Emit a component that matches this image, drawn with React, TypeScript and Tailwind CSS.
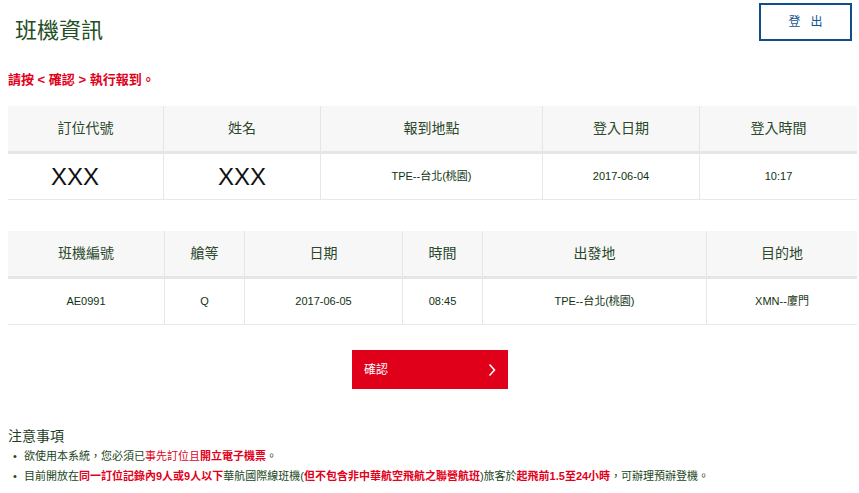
import React from "react";

const FONT = { fontFamily: '"Liberation Sans", Arial, "Noto Sans CJK TC", sans-serif' };

function HeaderCell({ children, last }: { children: React.ReactNode; last?: boolean }) {
  return (
    <div
      className={`flex items-center justify-center h-[45px] bg-[#f7f7f7] text-[14px] text-[#2b472b] ${
        last ? "" : "border-r border-[#e6e6e6]"
      }`}
    >
      {children}
    </div>
  );
}

function BodyCell({
  children,
  last,
  big,
  first,
}: {
  children: React.ReactNode;
  last?: boolean;
  big?: boolean;
  first?: boolean;
}) {
  return (
    <div
      className={`flex items-center justify-center h-[45px] bg-white ${
        big ? "text-[24px] text-[#111111]" : "text-[11px] text-[#0f330f]"
      } ${first ? "pr-[21px]" : ""} ${last ? "" : "border-r border-[#e6e6e6]"}`}
    >
      {children}
    </div>
  );
}

export default function App() {
  const t1 = ["訂位代號", "姓名", "報到地點", "登入日期", "登入時間"];
  const t2 = ["班機編號", "艙等", "日期", "時間", "出發地", "目的地"];
  const t2v = ["AE0991", "Q", "2017-06-05", "08:45", "TPE--台北(桃園)", "XMN--廈門"];
  return (
    <div className="w-[859px] h-[493px] bg-white overflow-hidden relative" style={FONT}>
      {/* top bar */}
      <div className="flex justify-between items-start">
        <h1 className="ml-[15px] mt-[16px] text-[22px] leading-[30px] text-[#234d23] font-normal">
          班機資訊
        </h1>
        <button className="mt-[3px] mr-[7px] w-[93px] h-[38px] border-2 border-[#0e4f8a] bg-white text-[#15578f] text-[12px] flex items-center justify-center gap-[10px]">
          <span>登</span>
          <span>出</span>
        </button>
      </div>

      <p className="ml-2 mt-[26px] text-[13px] leading-[16px] font-bold text-[#e2001a]">
        請按 &lt; 確認 &gt; 執行報到。
      </p>

      {/* table 1 */}
      <div className="ml-2 mt-[18px] w-[849px]">
        <div className="grid grid-cols-[156px_157px_222px_157px_157px] border-b-[3px] border-[#e3e8e3]">
          {t1.map((h, i) => (
            <HeaderCell key={h} last={i === t1.length - 1}>
              {h}
            </HeaderCell>
          ))}
        </div>
        <div className="grid grid-cols-[156px_157px_222px_157px_157px] border-b border-[#e8e8e8]">
          <BodyCell big first>
            XXX
          </BodyCell>
          <BodyCell big>XXX</BodyCell>
          <BodyCell>TPE--台北(桃園)</BodyCell>
          <BodyCell>2017-06-04</BodyCell>
          <BodyCell last>10:17</BodyCell>
        </div>
      </div>

      {/* table 2 */}
      <div className="ml-2 mt-[31px] w-[849px]">
        <div className="grid grid-cols-[157px_80px_158px_80px_224px_150px] border-b-[3px] border-[#e3e8e3]">
          {t2.map((h, i) => (
            <HeaderCell key={h} last={i === t2.length - 1}>
              {h}
            </HeaderCell>
          ))}
        </div>
        <div className="grid grid-cols-[157px_80px_158px_80px_224px_150px] border-b border-[#e8e8e8]">
          {t2v.map((v, i) => (
            <BodyCell key={i} last={i === t2v.length - 1}>
              {v}
            </BodyCell>
          ))}
        </div>
      </div>

      {/* confirm button */}
      <div className="flex justify-center mt-[25px]">
        <button className="ml-[1px] w-[156px] h-[39px] bg-[#e0001a] text-white text-[12px] flex items-center justify-between pl-[12px] pr-[12px]">
          <span>確認</span>
          <svg width="8" height="14" viewBox="0 0 8 14" fill="none">
            <path d="M1.5 1.5 L6.5 7 L1.5 12.5" stroke="white" strokeWidth="1.6" />
          </svg>
        </button>
      </div>

      {/* notes */}
      <div className="ml-2 mt-[38px]">
        <h2 className="text-[14px] leading-[18px] text-[#1f3d1f] font-normal">注意事項</h2>
        <ul className="mt-[1px] text-[11px] leading-[20px] text-[#1a451a]">
          <li className="flex">
            <span className="w-[16px] pl-[5px]">•</span>
            <span>
              欲使用本系統，您必須已<span className="text-[#e2001a]">事先訂位且</span>
              <span className="text-[#e2001a] font-bold">開立電子機票</span>。
            </span>
          </li>
          <li className="flex">
            <span className="w-[16px] pl-[5px]">•</span>
            <span>
              目前開放在<span className="text-[#e2001a] font-bold">同一訂位記錄內9人或9人以下</span>
              華航國際線班機(
              <span className="text-[#e2001a] font-bold">但不包含非中華航空飛航之聯營航班</span>
              )旅客於<span className="text-[#e2001a] font-bold">起飛前1.5至24小時</span>
              ，可辦理預辦登機。
            </span>
          </li>
        </ul>
      </div>
    </div>
  );
}
